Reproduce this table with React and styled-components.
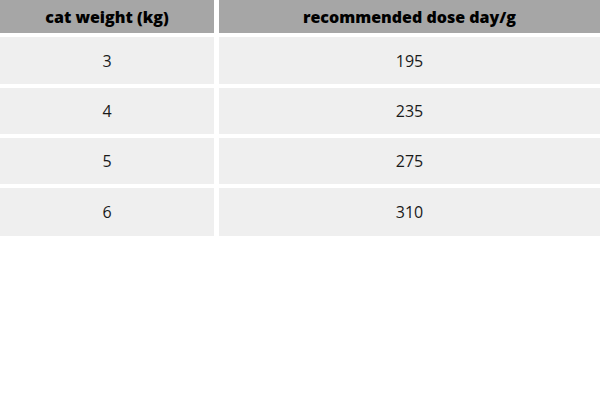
import React from "react";
import styled, { createGlobalStyle } from "styled-components";

const Global = createGlobalStyle`
  html, body { margin: 0; padding: 0; background: #ffffff; }
  body { font-family: "Open Sans", "Liberation Sans", sans-serif; }
`;

const Table = styled.div`
  display: grid;
  grid-template-columns: 214px 1fr;
  grid-template-rows: 33px 47px 46px 46px 48px;
  column-gap: 5px;
  row-gap: 4px;
  width: 600px;
`;

const HeadCell = styled.div`
  background: #a6a6a6;
  color: #000000;
  font-weight: 800;
  font-size: 16px;
  display: flex;
  align-items: center;
  justify-content: center;
`;

const Cell = styled.div`
  background: #efefef;
  color: #1a1a1a;
  font-weight: 400;
  font-size: 16px;
  display: flex;
  align-items: center;
  justify-content: center;
`;

const rows = [
  ["3", "195"],
  ["4", "235"],
  ["5", "275"],
  ["6", "310"],
];

export default function App() {
  return (
    <>
      <Global />
      <Table>
        <HeadCell>cat weight (kg)</HeadCell>
        <HeadCell>recommended dose day/g</HeadCell>
        {rows.map(([w, d]) => (
          <React.Fragment key={w}>
            <Cell>{w}</Cell>
            <Cell>{d}</Cell>
          </React.Fragment>
        ))}
      </Table>
    </>
  );
}
